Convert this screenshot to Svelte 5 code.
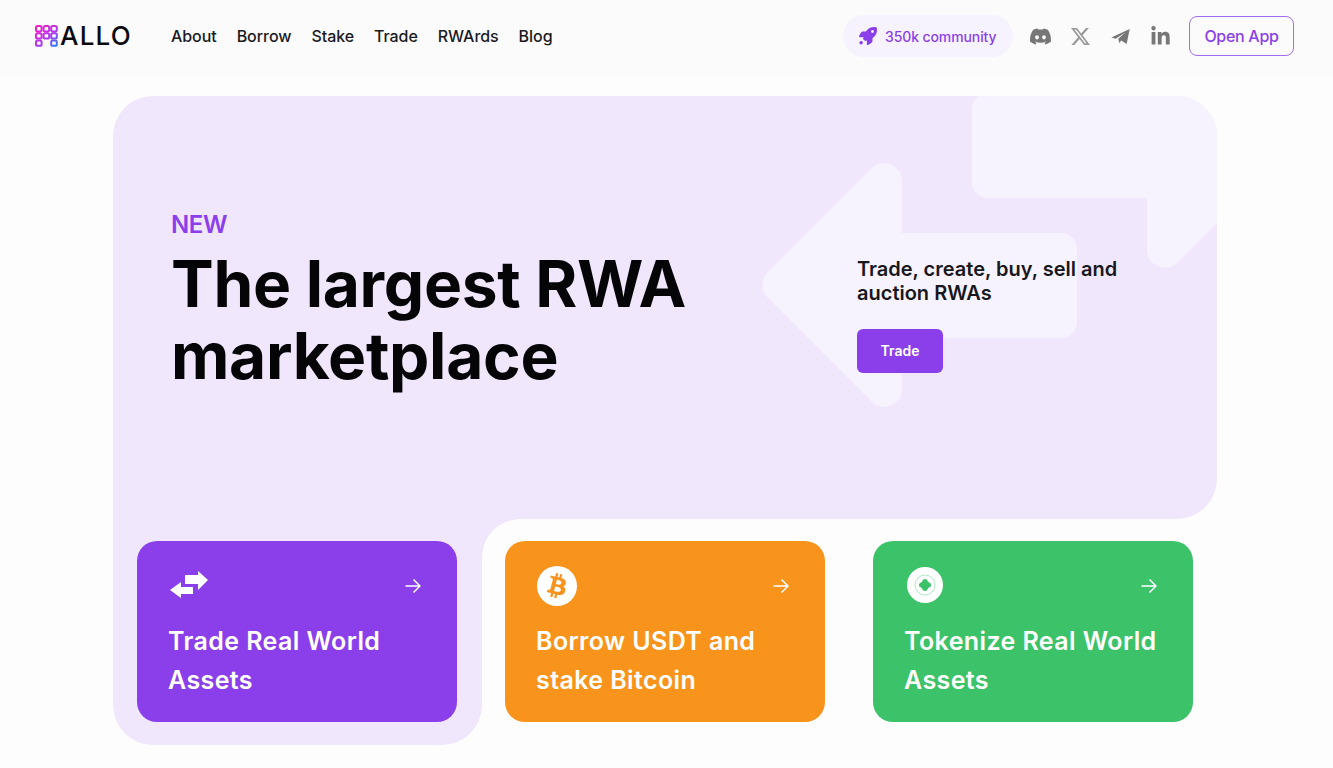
<script>
  const arrowPath =
    'M902 233H1061a16 16 0 0 1 16 16V322a16 16 0 0 1-16 16H902V390a18 18 0 0 1-30 12L768 298a18 18 0 0 1 0-26L872 168a18 18 0 0 1 30 12Z';

  const links = ['About', 'Borrow', 'Stake', 'Trade', 'RWArds', 'Blog'];

  const logoCells = [
    [0, 0], [1, 0], [2, 0],
    [0, 1], [1, 1], [2, 1],
    [0, 2], [2, 2]
  ];

  const cards = [
    { id: 'trade', title: 'Trade Real World Assets' },
    { id: 'borrow', title: 'Borrow USDT and stake Bitcoin' },
    { id: 'tokenize', title: 'Tokenize Real World Assets' }
  ];
</script>

<header class="topbar">
  <div class="brand">
    <svg class="mark" viewBox="0 0 23 22" width="23" height="22" aria-hidden="true">
      <defs>
        <linearGradient id="markfill" gradientUnits="userSpaceOnUse" x1="2" y1="0" x2="21" y2="22">
          <stop offset="0" stop-color="#f51cc8" />
          <stop offset="0.55" stop-color="#b335ee" />
          <stop offset="1" stop-color="#2a7ff7" />
        </linearGradient>
      </defs>
      <g fill="none" stroke="url(#markfill)" stroke-width="2">
        {#each logoCells as [col, row]}
          <rect x={1 + col * 7.6} y={1 + row * 7.2} width="5.6" height="5.4" rx="1.6" />
        {/each}
      </g>
    </svg>
    <span class="wordmark">ALLO</span>
  </div>

  <nav class="mainnav" aria-label="Main">
    {#each links as link}
      <a href="#top">{link}</a>
    {/each}
  </nav>

  <div class="actions">
    <div class="pill">
      <svg viewBox="0 0 512 512" width="18" height="18" aria-hidden="true">
        <path fill="#8b3fea" d="M156.6 384.9L125.7 354c-8.5-8.5-11.5-20.8-7.7-32.2c3-8.9 7-20.5 11.8-33.8L24 288c-8.6 0-16.6-4.6-20.9-12.1s-4.2-16.7 .2-24.1l52.5-88.5c13-21.9 36.5-35.3 61.9-35.3l82.3 0c2.4-4 4.8-7.7 7.2-11.3C289.1-4.1 411.1-8.1 483.9 5.3c11.6 2.1 20.6 11.2 22.8 22.8c13.4 72.9 9.3 194.8-111.4 276.7c-3.5 2.4-7.3 4.8-11.3 7.2v82.3c0 25.4-13.4 49-35.3 61.9l-88.5 52.5c-7.4 4.4-16.6 4.5-24.1 .2s-12.1-12.2-12.1-20.9V380.8c-14.1 4.9-26.4 8.9-35.7 11.9c-11.2 3.6-23.4 .5-31.8-7.8zM384 168a40 40 0 1 0 0-80 40 40 0 1 0 0 80z" />
        <circle cx="60" cy="450" r="50" fill="#8b3fea" />
      </svg>
      <span>350k community</span>
    </div>

    <div class="socials">
      <svg viewBox="0 0 24 24" width="21" height="21" aria-hidden="true">
        <path fill="#777" d="M20.317 4.3698a19.7913 19.7913 0 00-4.8851-1.5152.0741.0741 0 00-.0785.0371c-.211.3753-.4447.8648-.6083 1.2495-1.8447-.2762-3.68-.2762-5.4868 0-.1636-.3933-.4058-.8742-.6177-1.2495a.077.077 0 00-.0785-.037 19.7363 19.7363 0 00-4.8852 1.515.0699.0699 0 00-.0321.0277C.5334 9.0458-.319 13.5799.0992 18.0578a.0824.0824 0 00.0312.0561c2.0528 1.5076 4.0413 2.4228 5.9929 3.0294a.0777.0777 0 00.0842-.0276c.4616-.6304.8731-1.2952 1.226-1.9942a.076.076 0 00-.0416-.1057c-.6528-.2476-1.2743-.5495-1.8722-.8923a.077.077 0 01-.0076-.1277c.1258-.0943.2517-.1923.3718-.2914a.0743.0743 0 01.0776-.0105c3.9278 1.7933 8.18 1.7933 12.0614 0a.0739.0739 0 01.0785.0095c.1202.099.246.1981.3728.2924a.077.077 0 01-.0066.1276 12.2986 12.2986 0 01-1.873.8914.0766.0766 0 00-.0407.1067c.3604.698.7719 1.3628 1.225 1.9932a.076.076 0 00.0842.0286c1.961-.6067 3.9495-1.5219 6.0023-3.0294a.077.077 0 00.0313-.0552c.5004-5.177-.8382-9.6739-3.5485-13.6604a.061.061 0 00-.0312-.0286zM8.02 15.3312c-1.1825 0-2.1569-1.0857-2.1569-2.419 0-1.3332.9555-2.4189 2.157-2.4189 1.2108 0 2.1757 1.0952 2.1568 2.419 0 1.3332-.9555 2.4189-2.1569 2.4189zm7.9748 0c-1.1825 0-2.1569-1.0857-2.1569-2.419 0-1.3332.9554-2.4189 2.1569-2.4189 1.2108 0 2.1757 1.0952 2.1568 2.419 0 1.3332-.946 2.4189-2.1568 2.4189Z" />
      </svg>
      <svg viewBox="0 0 24 24" width="19" height="19" aria-hidden="true">
        <path fill="#999" d="M18.901 1.153h3.68l-8.04 9.19L24 22.846h-7.406l-5.8-7.584-6.638 7.584H.474l8.6-9.83L0 1.154h7.594l5.243 6.932ZM17.61 20.644h2.039L6.486 3.24H4.298Z" />
      </svg>
      <svg viewBox="0 0 24 24" width="21" height="21" aria-hidden="true">
        <path fill="#777" d="M1.5 13 22.5 3.5 19 20.5 13 16.5 10.5 19.5 9.5 14.5 17.5 7.5 6.5 14.5Z" />
      </svg>
      <svg viewBox="0 0 448 512" width="19" height="21" aria-hidden="true">
        <path fill="#777" d="M100.28 448H7.4V148.9h92.88zM53.79 108.1C24.09 108.1 0 83.5 0 53.8a53.79 53.79 0 0 1 107.58 0c0 29.7-24.1 54.3-53.79 54.3zM447.9 448h-92.68V302.4c0-34.7-.7-79.2-48.29-79.2-48.29 0-55.69 37.7-55.69 76.7V448h-92.78V148.9h89.08v40.8h1.3c12.4-23.5 42.69-48.3 87.88-48.3 94 0 111.28 61.9 111.28 142.3V448z" />
      </svg>
    </div>

    <a class="open-app" href="#top">Open App</a>
  </div>
</header>

<main class="page" id="top">
  <section class="hero">
    <svg class="hero-arrows" viewBox="113 96 1104 423" aria-hidden="true">
      <path d={arrowPath} />
      <path d={arrowPath} transform="rotate(180 1024.5 215.5)" />
    </svg>

    <div class="hero-title">
      <p class="eyebrow">NEW</p>
      <h1>The largest RWA marketplace</h1>
    </div>

    <div class="hero-side">
      <p>Trade, create, buy, sell and auction RWAs</p>
      <a class="cta" href="#top">Trade</a>
    </div>
  </section>

  <section class="cards">
    {#each cards as card, i}
      <div class={i === 0 ? 'slot first' : i === 1 ? 'slot second' : 'slot'}>
        <a class="card {card.id}" href="#top">
          <div class="card-top">
            {#if card.id === 'trade'}
              <svg viewBox="169 570 42 32" width="42" height="32" aria-hidden="true">
                <path fill="#fff" d="M185 575H198V571L208 580 198 590V584H185ZM193 587V594H181V598L170 590 181 582V587Z" />
              </svg>
            {:else if card.id === 'borrow'}
              <svg viewBox="0 0 24 24" width="40" height="40" aria-hidden="true">
                <circle cx="12" cy="12" r="12" fill="#fff" />
                <path fill="#f7931e" d="M17.288 10.291c.24-1.59-.974-2.45-2.64-3.03l.54-2.153-1.315-.33-.525 2.107c-.345-.087-.705-.167-1.064-.25l.526-2.127-1.32-.33-.54 2.165c-.285-.067-.565-.132-.84-.2l-1.815-.45-.35 1.407s.975.225.955.236c.535.136.63.486.615.766l-1.477 5.92c-.075.166-.24.406-.614.314.015.02-.96-.24-.96-.24l-.66 1.51 1.71.426.93.242-.54 2.19 1.32.327.54-2.17c.36.1.705.19 1.05.273l-.51 2.154 1.32.33.545-2.19c2.24.427 3.93.257 4.64-1.774.57-1.637-.03-2.58-1.217-3.196.854-.193 1.5-.76 1.68-1.93h.01zm-3.01 4.22c-.404 1.64-3.157.75-4.05.53l.72-2.9c.896.23 3.757.67 3.33 2.37zm.41-4.24c-.37 1.49-2.662.735-3.405.55l.654-2.64c.744.18 3.137.524 2.75 2.084v.006z" />
              </svg>
            {:else}
              <svg class="token" viewBox="0 0 36 36" width="36" height="36" aria-hidden="true">
                <circle cx="18" cy="18" r="18" fill="#fff" />
                <circle cx="18" cy="18" r="10" fill="none" stroke="#b4e8c7" stroke-width="1" />
                <circle cx="18" cy="18" r="4.5" fill="#3cc269" />
                <rect x="15.5" y="12" width="5" height="12" rx="2.5" fill="#3cc269" />
                <rect x="12" y="15.5" width="12" height="5" rx="2.5" fill="#3cc269" />
              </svg>
            {/if}
            <svg class="go" viewBox="0 0 16 16" width="16" height="16" aria-hidden="true">
              <path d="M0.5 8H15M8.5 1.5 15 8 8.5 14.5" fill="none" stroke="#fff" stroke-width="1.5" />
            </svg>
          </div>
          <h2>{card.title}</h2>
        </a>
      </div>
    {/each}
  </section>
</main>

<style>
  :global(body) {
    background: #fdfdfe;
    font-family: Inter, "Liberation Sans", sans-serif;
    color: #0c0c10;
  }

  a {
    text-decoration: none;
    color: inherit;
  }

  /* top bar */
  .topbar {
    height: 75px;
    box-sizing: border-box;
    padding: 0 39px 3px 35px;
    display: flex;
    align-items: center;
    background: #fbfbfc;
  }

  .brand {
    display: flex;
    align-items: center;
    width: 136px;
    gap: 2px;
  }

  .wordmark {
    font-size: 26px;
    font-weight: 500;
    letter-spacing: 1.2px;
    line-height: 1;
    color: #0b0b0f;
  }

  .mainnav {
    display: flex;
    gap: 20px;
    font-size: 16px;
    font-weight: 500;
    letter-spacing: -0.06px;
    color: #1a1a1f;
  }

  .actions {
    margin-left: auto;
    display: flex;
    align-items: center;
  }

  .pill {
    width: 170px;
    height: 42px;
    box-sizing: border-box;
    padding-left: 16px;
    display: flex;
    align-items: center;
    gap: 8px;
    border-radius: 21px;
    background: #f7f3fe;
    color: #8b3fea;
    font-size: 14px;
    font-weight: 500;
    letter-spacing: -0.1px;
  }

  .socials {
    display: flex;
    align-items: center;
    gap: 20px;
    margin: 0 19px 0 17px;
  }

  .socials svg {
    display: block;
  }

  .open-app {
    width: 105px;
    height: 40px;
    box-sizing: border-box;
    display: flex;
    align-items: center;
    justify-content: center;
    border: 1px solid #a06ff0;
    border-radius: 8px;
    color: #8b3fea;
    font-size: 16px;
    font-weight: 500;
    letter-spacing: -0.3px;
  }

  /* hero */
  .page {
    padding: 21px 116px 23px 113px;
  }

  .hero {
    position: relative;
    height: 423px;
    box-sizing: border-box;
    overflow: hidden;
    padding: 114px 0 0 58px;
    display: flex;
    background: #f1e7fd;
    border-radius: 40px 40px 40px 0;
  }

  .hero-arrows {
    position: absolute;
    inset: 0;
    width: 100%;
    height: 100%;
    fill: #f7f3fe;
  }

  .hero-title,
  .hero-side {
    position: relative;
  }

  .hero-title {
    width: 686px;
  }

  .eyebrow {
    margin: 0;
    font-size: 24px;
    line-height: 29px;
    font-weight: 600;
    letter-spacing: -0.4px;
    color: #8b3fea;
  }

  h1 {
    margin: 9px 0 0;
    width: 560px;
    font-size: 64px;
    line-height: 72px;
    font-weight: 700;
    letter-spacing: -0.3px;
    color: #050507;
  }

  .hero-side {
    padding-top: 47px;
    width: 300px;
  }

  .hero-side p {
    margin: 0 0 24px;
    width: 270px;
    font-size: 20px;
    line-height: 24px;
    font-weight: 600;
    color: #17171c;
  }

  .cta {
    display: flex;
    align-items: center;
    justify-content: center;
    width: 86px;
    height: 44px;
    box-sizing: border-box;
    padding-bottom: 1px;
    border-radius: 6px;
    background: #8b3fea;
    color: #fff;
    font-size: 14px;
    font-weight: 600;
  }

  /* bottom row */
  .cards {
    display: flex;
    height: 226px;
  }

  .slot {
    padding: 22px 48px 23px 0;
  }

  .slot.first {
    width: 369px;
    box-sizing: border-box;
    padding: 22px 25px 23px 24px;
    background: #f1e7fd;
    border-radius: 0 0 40px 40px;
  }

  .slot.second {
    position: relative;
    padding-left: 23px;
  }

  /* inverted corner where the panel steps down */
  .slot.second::before {
    content: '';
    position: absolute;
    top: 0;
    left: 0;
    width: 38px;
    height: 38px;
    background: radial-gradient(circle at 100% 100%, transparent 37.5px, #f1e7fd 38px);
  }

  .card {
    display: block;
    width: 320px;
    height: 181px;
    box-sizing: border-box;
    padding: 25px 36px 0 32px;
    border-radius: 20px;
    color: #fff;
  }

  .card.trade {
    background: #8b3fea;
  }

  .card.borrow {
    background: #f8941c;
  }

  .card.tokenize {
    background: #3cc269;
  }

  .card-top {
    height: 40px;
    margin-bottom: 16px;
    display: flex;
    align-items: center;
    justify-content: space-between;
  }

  .card-top svg {
    display: block;
  }

  .token {
    margin: -2px 0 0 2px;
  }

  h2 {
    margin: 0 0 0 -1px;
    width: 256px;
    font-size: 25px;
    line-height: 39px;
    font-weight: 600;
    letter-spacing: 0.4px;
  }
</style>
